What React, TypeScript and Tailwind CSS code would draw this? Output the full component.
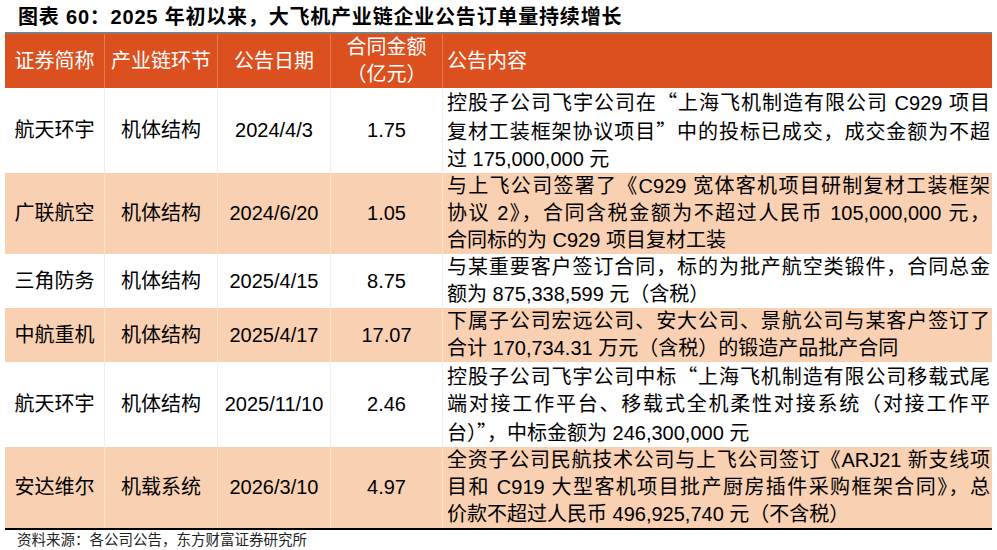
import React from "react";

type Row = {
  name: string;
  segment: string;
  date: string;
  amount: string;
  lines: string[];
  shaded: boolean;
};

const rows: Row[] = [
  {
    name: "航天环宇",
    segment: "机体结构",
    date: "2024/4/3",
    amount: "1.75",
    lines: [
      "控股子公司飞宇公司在“上海飞机制造有限公司 C929 项目",
      "复材工装框架协议项目”中的投标已成交，成交金额为不超",
      "过 175,000,000 元",
    ],
    shaded: false,
  },
  {
    name: "广联航空",
    segment: "机体结构",
    date: "2024/6/20",
    amount: "1.05",
    lines: [
      "与上飞公司签署了《C929 宽体客机项目研制复材工装框架",
      "协议 2》，合同含税金额为不超过人民币 105,000,000 元，",
      "合同标的为 C929 项目复材工装",
    ],
    shaded: true,
  },
  {
    name: "三角防务",
    segment: "机体结构",
    date: "2025/4/15",
    amount: "8.75",
    lines: [
      "与某重要客户签订合同，标的为批产航空类锻件，合同总金",
      "额为 875,338,599 元（含税）",
    ],
    shaded: false,
  },
  {
    name: "中航重机",
    segment: "机体结构",
    date: "2025/4/17",
    amount: "17.07",
    lines: [
      "下属子公司宏远公司、安大公司、景航公司与某客户签订了",
      "合计 170,734.31 万元（含税）的锻造产品批产合同",
    ],
    shaded: true,
  },
  {
    name: "航天环宇",
    segment: "机体结构",
    date: "2025/11/10",
    amount: "2.46",
    lines: [
      "控股子公司飞宇公司中标“上海飞机制造有限公司移载式尾",
      "端对接工作平台、移载式全机柔性对接系统（对接工作平",
      "台）”，中标金额为 246,300,000 元",
    ],
    shaded: false,
  },
  {
    name: "安达维尔",
    segment: "机载系统",
    date: "2026/3/10",
    amount: "4.97",
    lines: [
      "全资子公司民航技术公司与上飞公司签订《ARJ21 新支线项",
      "目和 C919 大型客机项目批产厨房插件采购框架合同》，总",
      "价款不超过人民币 496,925,740 元（不含税）",
    ],
    shaded: true,
  },
];

// curly quotes should take the full-width CJK glyph
const fmt = (s: string) =>
  s.split(/([“”])/).map((part, i) =>
    part === "“" || part === "”" ? (
      <span key={i} className="font-['Noto_Sans_CJK_SC',sans-serif]">
        {part}
      </span>
    ) : (
      <React.Fragment key={i}>{part}</React.Fragment>
    )
  );

const App = () => {
  return (
    <div
      lang="zh-CN"
      className="w-[997px] h-[550px] bg-white text-black font-['Liberation_Sans','Noto_Sans_CJK_SC',sans-serif]"
    >
      {/* Title */}
      <div className="h-[32px] pl-[18px] pt-[2px] flex items-center text-[20px] font-bold tracking-[0.8px]">
        图表 60：2025 年初以来，大飞机产业链企业公告订单量持续增长
      </div>

      <div className="ml-[5px] w-[987px]">
        {/* Header */}
        <div className="grid grid-cols-[100px_113px_113px_112px_1fr] border-t-2 border-[#7f7f7f] bg-[#dc5020] text-white text-[20px] leading-[27px]">
          <div className="flex items-center justify-center border-r border-[#e57a52]">证券简称</div>
          <div className="flex items-center justify-center border-r border-[#e57a52]">产业链环节</div>
          <div className="flex items-center justify-center border-r border-[#e57a52]">公告日期</div>
          <div className="flex flex-col items-center justify-center border-r border-[#e57a52]">
            <span>合同金额</span>
            <span>（亿元）</span>
          </div>
          <div className="flex items-center pl-[4px] h-[54px]">公告内容</div>
        </div>

        {/* Body */}
        {rows.map((r, idx) => {
          const sep = r.shaded ? "border-[#fbe2cf]" : "border-[#eeeeee]";
          return (
            <div
              key={idx}
              className={`grid grid-cols-[100px_113px_113px_112px_1fr] text-[20px] leading-[27px] ${
                r.shaded ? "bg-[#f9d1b2]" : "bg-white"
              }`}
            >
              <div className={`flex items-center justify-center border-r ${sep}`}>{r.name}</div>
              <div className={`flex items-center justify-center border-r ${sep}`}>{r.segment}</div>
              <div className={`flex items-center justify-center border-r ${sep}`}>{r.date}</div>
              <div className={`flex items-center justify-center border-r ${sep}`}>{r.amount}</div>
              <div className="pl-[4px] pr-[2px]">
                {r.lines.map((l, j) => (
                  <div
                    key={j}
                    className={
                      j < r.lines.length - 1
                        ? "text-justify [text-align-last:justify]"
                        : "text-left"
                    }
                  >
                    {fmt(l)}
                  </div>
                ))}
              </div>
            </div>
          );
        })}

        {/* Source */}
        <div className="border-t-2 border-black pl-[12px] pt-[1px] text-[14.5px] leading-[18px] text-[#222]">
          资料来源：各公司公告，东方财富证券研究所
        </div>
      </div>
    </div>
  );
};

export default App;
